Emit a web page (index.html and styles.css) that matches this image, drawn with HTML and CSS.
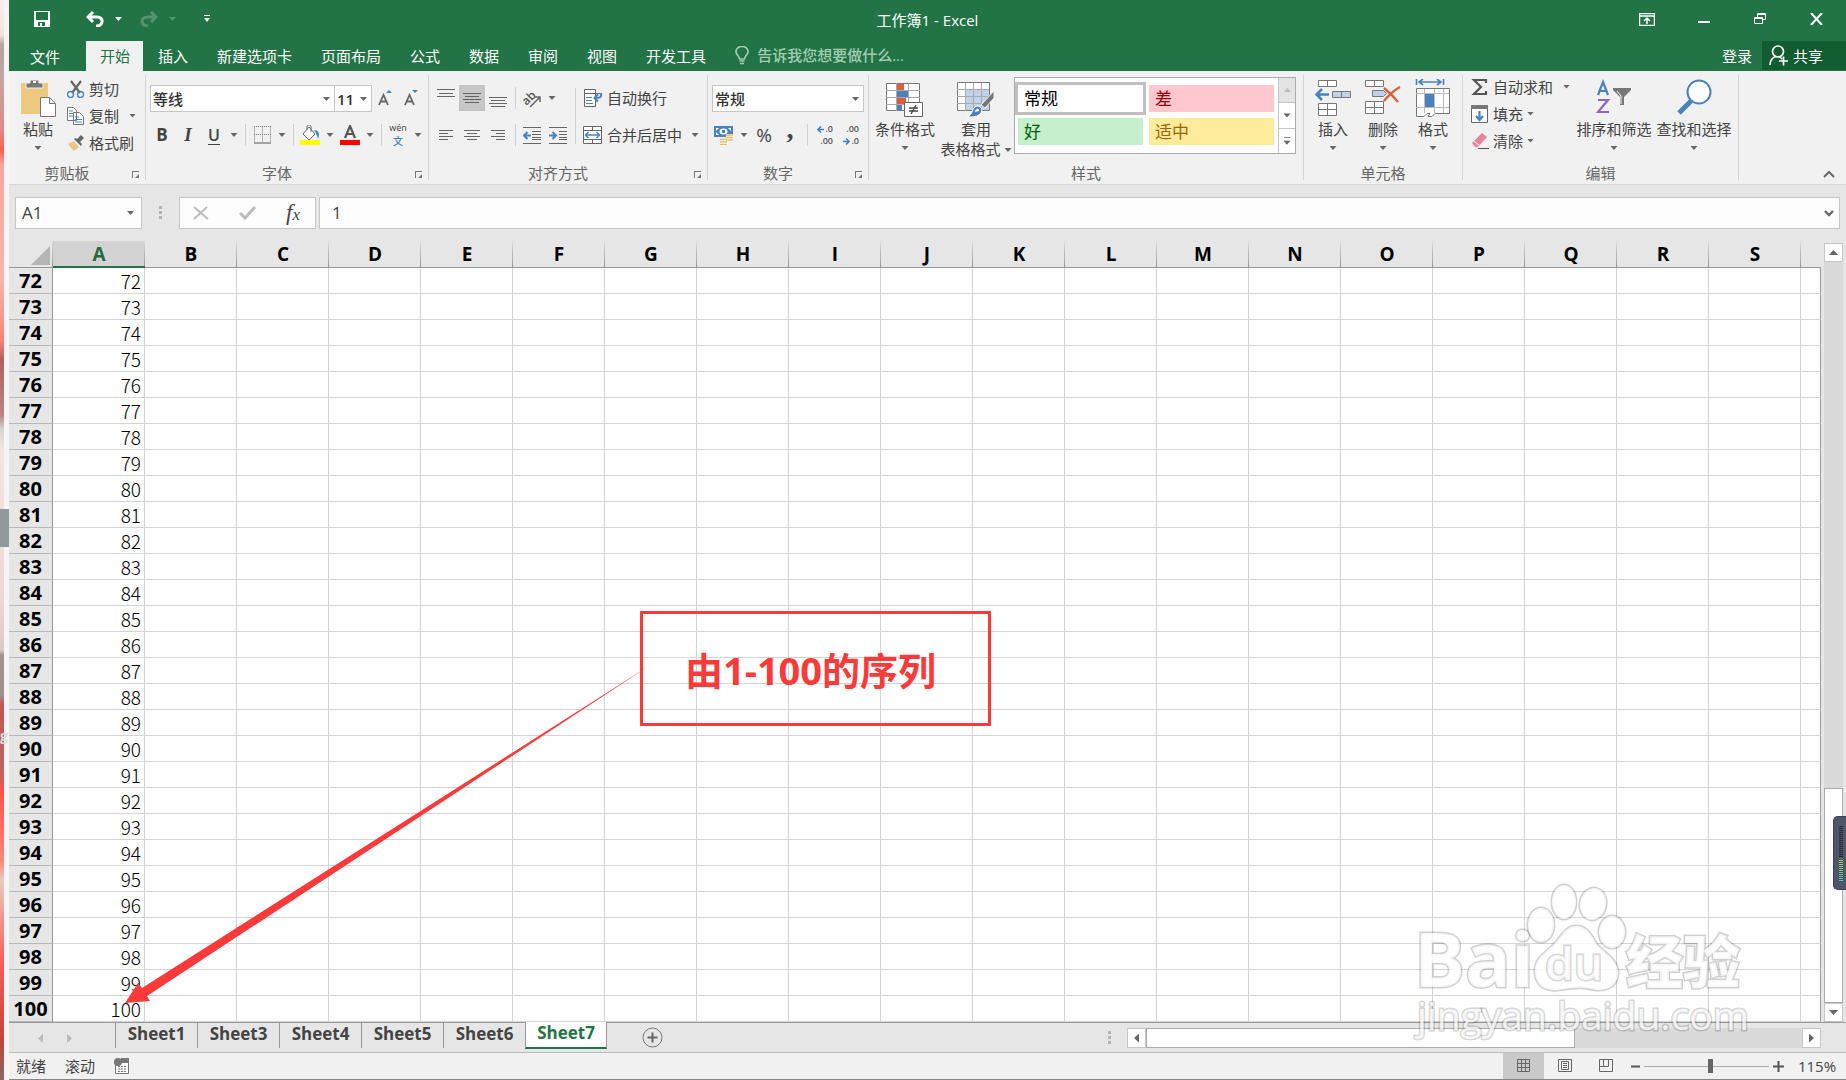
FILE: index.html
```html
<!DOCTYPE html>
<html lang="zh-CN">
<head>
<meta charset="utf-8">
<meta name="viewport" content="width=device-width, initial-scale=1">
<title>工作簿1 - Excel</title>
<link rel="stylesheet" href="styles.css">
</head>
<body>
<div class="desktop-edge"><span class="desktop-chip"></span><span class="desktop-letter">g</span></div>
<div class="app">
  <header class="titlebar">
    <div class="quick">
      <button aria-label="保存"><svg width="16" height="16" viewBox="0 0 16 16"><path fill="#fff" fill-rule="evenodd" d="M0 0h16v16H0zM2 1v8h12V1zM4 11v4h2v-3h2v3h3v-4z"/></svg></button>
      <button class="undo" aria-label="撤消"><svg width="18" height="16" viewBox="0 0 18 16"><path d="M7 1L2 6l5 5M2 6h9c7 0 7 9-1 9" fill="none" stroke="#fff" stroke-width="3"/></svg></button>
      <i class="caret light"></i>
      <button class="redo" aria-label="恢复"><svg width="18" height="16" viewBox="0 0 18 16"><path d="M11 1l5 5-5 5M16 6H8c-8 0-8 8 0 9" fill="none" stroke="#529470" stroke-width="3"/></svg></button>
      <i class="caret dim"></i>
      <button class="more" aria-label="自定义快速访问工具栏"><svg width="6" height="8" viewBox="0 0 6 8"><path d="M0 0h6v1H0zM0 3h6L3 7z" fill="#fff"/></svg></button>
    </div>
    <h1>工作簿1 - Excel</h1>
    <div class="window-buttons">
      <button aria-label="功能区显示选项"><svg width="16" height="13" viewBox="0 0 16 13"><path d="M.5.5h15v12H.5zM1 3h14M8 11V5M5 8l3-3 3 3" fill="none" stroke="#fff" stroke-width="1.5"/></svg></button>
      <button aria-label="最小化"><svg width="13" height="14" viewBox="0 0 13 14"><path d="M0 9h12v2H0z" fill="#fff"/></svg></button>
      <button aria-label="还原"><svg width="13" height="14" viewBox="0 0 13 14"><path d="M.5 5.500h8v6h-8zM.5 6.500h8M3.500 5V1.500h8v6H9M3.500 2.500h8" fill="none" stroke="#fff"/></svg></button>
      <button aria-label="关闭"><svg width="13" height="12" viewBox="0 0 13 12"><path d="M1 0l11 12M12 0L1 12" stroke="#fff" stroke-width="2"/></svg></button>
    </div>
  </header>

  <nav class="menu">
    <button class="file">文件</button>
    <button class="current">开始</button>
    <button>插入</button>
    <button>新建选项卡</button>
    <button>页面布局</button>
    <button>公式</button>
    <button>数据</button>
    <button>审阅</button>
    <button>视图</button>
    <button>开发工具</button>
    <button class="tell"><svg width="14" height="19" viewBox="0 0 14 19"><path d="M4.500 13c0-3-3.500-4-3.500-7.500a6 5 0 0 1 12 0C13 9 9.500 10 9.500 13zM4.500 15h5M5 17.500h4" fill="none" stroke="#a3cdb3" stroke-width="1.700"/></svg>告诉我您想要做什么...</button>
    <button class="login">登录</button>
    <button class="share"><svg width="20" height="21" viewBox="0 0 20 21"><path d="M9 1a5.500 5.500 0 1 1 0 11A5.500 5.500 0 0 1 9 1zM1 20c0-5 3-8 6-8.500M11 12l2 2M10 16h9M14.500 11.500v9" fill="none" stroke="#fff" stroke-width="1.700"/></svg>共享</button>
  </nav>

  <section class="ribbon">
    <div class="group g-clip">
      <div class="body">
        <button class="big w58"><svg width="35" height="40" viewBox="0 0 35 40"><path d="M0 4h27v31H0z" fill="#edc87e"/><path d="M5 9V4h4V1h9v3h4v5z" fill="#777" stroke="#f1f1f1"/><path d="M12 2h3v2h-3z" fill="#fff"/><path d="M19.500 18.500h9l6 6v13h-15zM28.500 18.500v6h6" fill="#fff" stroke="#777"/></svg><span>粘贴</span><i class="caret"></i></button>
        <div class="stack low">
          <button><svg width="18" height="18" viewBox="0 0 18 18"><path d="M4 1l9 12M14 1L5 13" stroke="#666" stroke-width="2.200"/><path d="M3.500 11.500a3 3 0 1 1 0 6 3 3 0 0 1 0-6zM13.500 11.500a3 3 0 1 1 0 6 3 3 0 0 1 0-6z" fill="none" stroke="#4a82bd" stroke-width="1.400"/></svg>剪切</button>
          <button><svg width="18" height="18" viewBox="0 0 18 18"><path d="M.5.5h6l3 3v10h-9zM6.500 5.500h6l4 4v8h-10z" fill="#fff" stroke="#777"/><path d="M2 4h4M2 6.500h4M2 9h4M8 10h4M8 12.500h7M8 15h7" stroke="#4a82bd"/></svg>复制<i class="caret wide"></i></button>
          <button><svg width="18" height="18" viewBox="0 0 18 18"><path d="M1 10l6-3 5 6-5 4z" fill="#e9c486"/><path d="M7 5l7 7 1-2-2-2 4-4-3-3-4 4-2-1z" fill="#666"/></svg>格式刷</button>
        </div>
      </div>
      <div class="caption">剪贴板<i class="launch"></i></div>
    </div>

    <div class="group g-font">
      <div class="body rows">
        <div class="row">
          <select class="combo font-name" aria-label="字体"><option>等线</option></select><select class="combo font-size" aria-label="字号"><option>11</option></select>
          <button class="ib" aria-label="增大字号"><svg width="16" height="18" viewBox="0 0 16 18"><path d="M2 16L6.500 6 11 16M4 12.500h5" fill="none" stroke="#666" stroke-width="1.800"/><path d="M9 4l3-3 3 3z" fill="#4a82bd"/></svg></button>
          <button class="ib" aria-label="减小字号"><svg width="16" height="18" viewBox="0 0 16 18"><path d="M2 16L6.500 6 11 16M4 12.500h5" fill="none" stroke="#666" stroke-width="1.800"/><path d="M9 1h6l-3 3z" fill="#4a82bd"/></svg></button>
        </div>
        <div class="row">
          <button class="ib bold">B</button><button class="ib italic">I</button><button class="ib under">U</button><i class="dd"></i><i class="sep"></i>
          <button class="ib" aria-label="边框"><svg width="17" height="18" viewBox="0 0 17 18"><path d="M.5.500v16M8.500.500v16M16.500.500v16M0 .500h17M0 8.500h17" stroke="#777" stroke-dasharray="1 1"/><path d="M0 17h17" stroke="#555" stroke-width="1"/></svg></button><i class="dd"></i><i class="sep"></i>
          <button class="ib" aria-label="填充颜色"><svg width="20" height="20" viewBox="0 0 20 20"><path d="M9 2l6 7-6 6-6-6z" fill="#fff" stroke="#666"/><path d="M7 5V1.500c0-2 4-2 4 0V7" fill="none" stroke="#666"/><path d="M14 5c5 0 6 4 4 9-1-4-2-6-4-9z" fill="#4a82bd"/><path d="M0 15h20v5H0z" fill="#ff0"/></svg></button><i class="dd"></i>
          <button class="ib" aria-label="字体颜色"><svg width="20" height="20" viewBox="0 0 20 20"><path d="M5 13L10 1l5 12M7 9h6" fill="none" stroke="#555" stroke-width="2.200"/><path d="M0 15h20v5H0z" fill="red"/></svg></button><i class="dd"></i><i class="sep"></i>
          <button class="ib phon"><span>wén</span><b>文</b></button><i class="dd"></i>
        </div>
      </div>
      <div class="caption">字体<i class="launch"></i></div>
    </div>

    <div class="group g-align">
      <div class="body">
        <div class="rows narrow">
          <div class="row">
            <button class="ib" aria-label="顶端对齐"><svg width="18" height="18" viewBox="0 0 18 18"><path d="M0 .5h18M2 4.500h14M0 7.500h18" stroke="#666"/></svg></button>
            <button class="ib pressed" aria-label="垂直居中"><svg width="18" height="18" viewBox="0 0 18 18"><path d="M0 4.500h18M2 7.500h14M0 10.500h18M2 13.500h14" stroke="#666"/></svg></button>
            <button class="ib" aria-label="底端对齐"><svg width="18" height="18" viewBox="0 0 18 18"><path d="M0 8.500h18M2 11.500h14M0 14.500h18M2 17.500h14" stroke="#666"/></svg></button><i class="sep"></i>
            <button class="ib" aria-label="方向"><svg class="spill" width="20" height="19" viewBox="0 0 20 19"><text x="0" y="14" transform="rotate(-45 6 10)" class="ab">ab</text><path d="M8 18L18 8M13 8h5v5" fill="none" stroke="#666" stroke-width="1.500"/></svg></button><i class="dd"></i>
          </div>
          <div class="row">
            <button class="ib" aria-label="左对齐"><svg width="14" height="12" viewBox="0 0 14 12"><path d="M0 1.500h14M0 4.500h9M0 7.500h14M0 10.500h9" stroke="#666"/></svg></button>
            <button class="ib" aria-label="居中"><svg width="16" height="12" viewBox="0 0 16 12"><path d="M0 1.500h16M3 4.500h10M0 7.500h16M3 10.500h10" stroke="#666"/></svg></button>
            <button class="ib" aria-label="右对齐"><svg width="14" height="12" viewBox="0 0 14 12"><path d="M0 1.500h14M5 4.500h9M0 7.500h14M5 10.500h9" stroke="#666"/></svg></button><i class="sep"></i>
            <button class="ib" aria-label="减少缩进"><svg width="18" height="17" viewBox="0 0 18 17"><path d="M0 .5h18M9 4.500h9M9 7.500h9M9 10.500h9M9 12.500h9M0 16.500h18" stroke="#666"/><path d="M8 8.500H1M4.500 5L1 8.500 4.500 12" fill="none" stroke="#4a82bd" stroke-width="2"/></svg></button>
            <button class="ib" aria-label="增加缩进"><svg width="18" height="17" viewBox="0 0 18 17"><path d="M0 .5h18M10 4.500h8M10 7.500h8M10 10.500h8M10 12.500h8M0 16.500h18" stroke="#666"/><path d="M0 8.500h7M3.500 5L7 8.500 3.500 12" fill="none" stroke="#4a82bd" stroke-width="2"/></svg></button>
          </div>
        </div>
        <i class="sep tall"></i>
        <div class="rows wraps">
          <button class="labelled"><svg width="20" height="19" viewBox="0 0 20 19"><path d="M1.500.500h11v17h-11zM1 4.500h16" fill="#fff" stroke="#666"/><path d="M3 8.500h6M3 11.500h6M3 14.500h7" stroke="#4a82bd"/><path d="M18 4c1 5-2 5-6 5M15 5.500L11.500 9l3.500 3.500" fill="none" stroke="#4a82bd" stroke-width="2"/></svg>自动换行</button>
          <button class="labelled"><svg width="20" height="19" viewBox="0 0 20 19"><path d="M.5.500h18v17H.5zM.5 4.500h18M.5 13.500h18M9.500.500v4M9.500 13.500v4" fill="#fff" stroke="#666"/><path d="M3 9h13M5.500 6L2.500 9l3 3M13.500 6l3 3-3 3" fill="none" stroke="#4a82bd" stroke-width="1.500"/></svg>合并后居中<i class="dd"></i></button>
        </div>
      </div>
      <div class="caption">对齐方式<i class="launch"></i></div>
    </div>

    <div class="group g-num">
      <div class="body rows">
        <div class="row"><select class="combo number" aria-label="数字格式"><option>常规</option></select></div>
        <div class="row">
          <button class="ib" aria-label="会计数字格式"><svg width="20" height="19" viewBox="0 0 20 19"><path d="M0 0h19v11H0z" fill="#4a82bd"/><path d="M2 2h3L2 5zM17 2h-3l3 3zM2 9h3L2 6zM9.500 2.500a4 3 0 1 1 0 6 4 3 0 0 1 0-6" fill="#fff"/><path d="M8 4h3v3H8z" fill="#4a82bd"/><path d="M12 8h7v8h-5v3H6v-6h6z" fill="#fff"/><path d="M12 9h7M12 11.500h7M12 14h7M6 13.500h7M6 16h7M6 18.500h7" stroke="#e9b96e" stroke-width="1.600"/></svg></button><i class="dd"></i>
          <button class="ib percent">%</button><button class="ib comma">,</button><i class="sep"></i>
          <button class="ib decimals"><span><svg width="7" height="7" viewBox="0 0 7 7"><path d="M7 3.500H1M4 .5l-3 3 3 3" fill="none" stroke="#4a82bd" stroke-width="1.600"/></svg>.0</span><span>.00</span></button>
          <button class="ib decimals"><span>.00</span><span><svg width="7" height="7" viewBox="0 0 7 7"><path d="M0 3.500h6M3 .5l3 3-3 3" fill="none" stroke="#4a82bd" stroke-width="1.600"/></svg>.0</span></button>
        </div>
      </div>
      <div class="caption">数字<i class="launch"></i></div>
    </div>

    <div class="group g-style">
      <div class="body">
        <button class="big w70"><svg width="38" height="40" viewBox="0 0 38 40"><path d="M.5 4.500h33v27H.5z" fill="#fff" stroke="#777"/><path d="M11 5h7v6h-7zM11 19h9v6h-9z" fill="#d9603f"/><path d="M11 12h11v6H11zM11 26h5v5h-5z" fill="#4a82bd"/><path d="M0 11.500h34M0 18.500h34M0 25.500h34M10.500 4v28M22.500 4v28" stroke="#aaa"/><path d="M18.500 23.500h18v14h-18z" fill="#fff" stroke="#666"/><path d="M23 29h9M23 32h9M30 26l-5 9" stroke="#444" stroke-width="1.300"/></svg><span>条件格式</span><i class="caret"></i></button>
        <button class="big w72"><svg width="38" height="40" viewBox="0 0 38 40"><path d="M.5 3.500h32v28H.5z" fill="#fff" stroke="#777"/><path d="M9 11h23v20H9z" fill="#c0d3ea"/><path d="M0 10.500h32M0 17.500h32M0 24.500h32M8.500 4v28M16.500 4v28M24.500 4v28" stroke="#aaa"/><path d="M37 12v7l-9 10-4-3z" fill="#777" stroke="#f1f1f1"/><path d="M10 38c7-3 4-9 10-11 6 0 6 6 2 9-3 2-8 2-12 2z" fill="#4a82bd" stroke="#fff"/><path d="M18 33c0-4 5-4 4-1z" fill="#fff"/></svg><span>套用</span><span>表格格式<i class="caret"></i></span></button>
        <div class="gallery">
          <div class="swatches">
            <button class="sw normal">常规</button><button class="sw bad">差</button>
            <button class="sw good">好</button><button class="sw neutral">适中</button>
          </div>
          <div class="gallery-nav">
            <button class="off" aria-label="向上"><i class="caret up"></i></button><button aria-label="向下"><i class="caret"></i></button><button aria-label="其他"><i class="caret bar"></i></button>
          </div>
        </div>
      </div>
      <div class="caption center">样式</div>
    </div>

    <div class="group g-cell">
      <div class="body">
        <button class="big w50"><svg width="36" height="40" viewBox="0 0 36 40"><path d="M3.500 1.500h18v6h-18zM12.500 1.500v6M3.500 24.500h18v12h-18zM3.500 30.500h18M12.500 24.500v12" fill="#fff" stroke="#777"/><path d="M17.500 12.500h18v6h-18zM26.500 12.500v6" fill="#c0d3ea" stroke="#777"/><path d="M14 15.500H2M7 10l-5.500 5.500L7 21" fill="none" stroke="#4a82bd" stroke-width="2.600"/></svg><span>插入</span><i class="caret"></i></button>
        <button class="big w50"><svg width="36" height="40" viewBox="0 0 36 40"><path d="M.5 1.500h18v6H.5zM9.500 1.500v6M.5 22.500h18v12H.5zM.5 28.500h18M9.500 22.500v12" fill="#fff" stroke="#777"/><path d="M7.500 11.500h11l3 3-3 3h-11z" fill="#c0d3ea" stroke="#777"/><path d="M19 9c5 4 10 9 14 14M35 8c-7 4-12 9-16 14" fill="none" stroke="#d9603f" stroke-width="2.400"/></svg><span>删除</span><i class="caret"></i></button>
        <button class="big w50"><svg width="36" height="40" viewBox="0 0 36 40"><path d="M1.500 0v6M28.500 0v6M4 3h22M8 0L4 3l4 3M22 0l4 3-4 3" fill="none" stroke="#4a82bd" stroke-width="1.600"/><path d="M1.500 9.500h33v25H20l-3 3h-4l2-3h-3l-3 3H1.500z" fill="#fff" stroke="#777"/><path d="M1 14.500h33M1 28.500h33M9.500 10v24M19.500 10v24M28.500 10v24" stroke="#bbb"/><path d="M10 15h9v13h-9z" fill="#4a82bd"/></svg><span>格式</span><i class="caret"></i></button>
      </div>
      <div class="caption center">单元格</div>
    </div>

    <div class="group g-edit">
      <div class="body">
        <div class="stack">
          <button><svg width="18" height="18" viewBox="0 0 18 18"><path d="M15 5V2H3l7 7-7 7h12v-3" fill="none" stroke="#555" stroke-width="2.200"/></svg>自动求和<i class="caret wide"></i></button>
          <button><svg width="18" height="18" viewBox="0 0 18 18"><path d="M.5.500h16v17H.5z" fill="#fff" stroke="#666"/><path d="M0 0h17v4H0z" fill="#777"/><path d="M8.500 6v9M5 11l3.500 4 3.500-4" fill="none" stroke="#4a82bd" stroke-width="2.200"/></svg>填充<i class="caret"></i></button>
          <button><svg width="18" height="18" viewBox="0 0 18 18"><path d="M1 11L11 1l5 4L7 15H4z" fill="#e8859a"/><path d="M3 9l6 5" stroke="#fff"/><path d="M7 16.500h11" stroke="#555"/></svg>清除<i class="caret"></i></button>
        </div>
        <button class="big w80"><svg width="36" height="40" viewBox="0 0 36 40"><path d="M2 16L7 3l5 13M4 12h6" fill="none" stroke="#4a82bd" stroke-width="2.200"/><path d="M2 21h10L2 33h11" fill="none" stroke="#9563b8" stroke-width="2.200"/><path d="M17 9h18v2l-7 7v8h-4v-8l-7-7z" fill="#777"/><path d="M21 12l4 5v8" fill="none" stroke="#fff"/></svg><span>排序和筛选</span><i class="caret"></i></button>
        <button class="big w80"><svg width="36" height="40" viewBox="0 0 36 40"><path d="M3 34l12-12" stroke="#4a82bd" stroke-width="5"/><circle cx="23" cy="13" r="11.500" fill="#fff" stroke="#4a82bd" stroke-width="2"/></svg><span>查找和选择</span><i class="caret"></i></button>
      </div>
      <div class="caption center">编辑</div>
    </div>
    <button class="collapse" aria-label="折叠功能区"><svg width="12" height="8" viewBox="0 0 12 8"><path d="M1 7l5-5 5 5" fill="none" stroke="#666" stroke-width="2"/></svg></button>
  </section>

  <div class="formula-bar">
    <div class="name-box"><input value="A1" aria-label="名称框"><i class="caret"></i></div>
    <i class="dots"></i>
    <div class="fx">
      <button aria-label="取消"><svg width="16" height="14" viewBox="0 0 16 14"><path d="M1 1l14 12M14 1L1 13" stroke="#bbb" stroke-width="2"/></svg></button>
      <button aria-label="输入"><svg width="17" height="14" viewBox="0 0 17 14"><path d="M1 7l5 5L16 1" fill="none" stroke="#bbb" stroke-width="3"/></svg></button>
      <button class="fx-label">f<small>x</small></button>
    </div>
    <div class="formula"><input value="1" aria-label="编辑栏"><svg width="10" height="7" viewBox="0 0 10 7"><path d="M1 1l4 4 4-4" fill="none" stroke="#666" stroke-width="2.400"/></svg></div>
  </div>

  <main class="sheet">
    <div class="grid-wrap">
      <table class="grid" id="grid"></table>
    </div>
    <div class="vscroll">
      <button aria-label="向上滚动"><i class="tri up"></i></button>
      <div class="trough"><div class="thumb"></div></div>
      <button aria-label="向下滚动"><i class="tri"></i></button>
    </div>
    <svg class="arrow" width="660" height="790" viewBox="0 0 660 790"><path d="M116 762l13-20 4 5L643 423 138 755l3 5z" fill="#fd3a3a"/></svg>
    <div class="callout">由1-100的序列</div>
    <svg class="watermark" width="350" height="170" viewBox="0 0 350 170">
      <g class="mark">
        <text x="5" y="108" class="bai">Bai</text>
        <ellipse cx="132" cy="46" rx="13" ry="17"/><ellipse cx="155" cy="23" rx="12" ry="17"/><ellipse cx="184" cy="25" rx="13" ry="16" transform="rotate(12 184 25)"/><ellipse cx="203" cy="53" rx="13" ry="16"/>
        <path d="M167 47c11 0 15 8 20 17 7 10 22 15 22 30 0 12-10 18-21 17-8-1-14-3-21-2-9 0-15 3-24 2-11-1-17-8-17-19 0-14 12-19 21-29 7-8 10-16 20-16z"/>
        <text x="136" y="101" class="du">du</text>
        <text x="217" y="104" class="jy">经验</text>
        <text x="8" y="151" class="url">jingyan.baidu.com</text>
      </g>
    </svg>
    <div class="meter"><i></i></div>
  </main>

  <div class="tabbar">
    <div class="tab-nav"><i class="tri left"></i><i class="tri right"></i></div>
    <div class="tabs">
      <button>Sheet1</button><button>Sheet3</button><button>Sheet4</button><button>Sheet5</button><button>Sheet6</button><button class="active">Sheet7</button>
      <button class="add" aria-label="新工作表"><svg width="21" height="21" viewBox="0 0 21 21"><circle cx="10.500" cy="10.500" r="9.500" fill="none" stroke="#777"/><path d="M10.500 5.500v10M5.500 10.500h10" stroke="#666" stroke-width="2"/></svg></button>
    </div>
    <i class="dots"></i>
    <div class="hscroll">
      <button aria-label="向左滚动"><i class="tri left"></i></button>
      <div class="trough"><div class="thumb"></div></div>
      <button aria-label="向右滚动"><i class="tri right"></i></button>
    </div>
  </div>

  <footer class="status">
    <span>就绪</span><span>滚动</span>
    <svg width="16" height="16" viewBox="0 0 16 16"><path d="M1.500 3v12.500h13V2" fill="#fff" stroke="#777"/><path d="M7 0h8v5H7z" fill="#777"/><circle cx="4" cy="4" r="4" fill="#777"/><path d="M4 8.500h9M4 11h9M4 13.500h9" stroke="#777" stroke-dasharray="2 1"/></svg>
    <div class="views">
      <button class="on" aria-label="普通"><svg width="14" height="14" viewBox="0 0 14 14"><path d="M.5.500h12v12H.5zM4.500 0v13M8.500 0v13M0 4.500h13M0 8.500h13" fill="none" stroke="#666"/></svg></button>
      <button aria-label="页面布局"><svg width="14" height="14" viewBox="0 0 14 14"><path d="M.5.500h13v12H.5zM3.500 2.500h7v8h-7zM5 4.500h4M5 6.500h4M5 8.500h4" fill="none" stroke="#666"/></svg></button>
      <button aria-label="分页预览"><svg width="14" height="14" viewBox="0 0 14 14"><path d="M.5.500h13v12H.5zM4.500.500v7h5v-7M.5 7.500h4" fill="none" stroke="#666"/></svg></button>
    </div>
    <button class="zoom-step" aria-label="缩小"><svg width="11" height="11" viewBox="0 0 11 11"><path d="M1 5.500h9" stroke="#555" stroke-width="2"/></svg></button>
    <input type="range" min="0" max="100" value="53" aria-label="显示比例">
    <button class="zoom-step" aria-label="放大"><svg width="11" height="11" viewBox="0 0 11 11"><path d="M0 5.500h11M5.500 0v11" stroke="#555" stroke-width="2"/></svg></button>
    <button class="zoom-value">115%</button>
  </footer>
</div>
<script src="sheet.js"></script>
</body>
</html>
```
FILE: styles.css
```css
* { box-sizing: border-box; }
body {
  margin: 0;
  display: flex;
  min-height: 100vh;
  font: 15px/20px "Open Sans", "Noto Sans CJK SC", sans-serif;
  color: #444;
  background: #e6e6e6;
}
button {
  display: inline-flex;
  align-items: center;
  justify-content: center;
  margin: 0;
  padding: 0;
  border: 0;
  background: none;
  font: inherit;
  color: inherit;
  white-space: nowrap;
}
button, svg, i { flex: none; }
svg { display: block; }
input { font: inherit; color: inherit; border: 0; background: none; padding: 0; margin: 0; }

/* desktop showing beside the window */
.desktop-edge {
  flex: none;
  width: 9px;
  position: relative;
  border-right: 5px solid #f6f4f4;
  background: linear-gradient(#f8f0ee 0, #f3e3df 35px, #b7a3a0 45px, #c4a5a2 80px, #e08a85 130px, #ff5c50 150px, #f7a79d 165px, #f8b4ac 280px, #ff8476 340px, #b0605e 360px, #b98582 415px, #d8d8d4 430px, #f3e4e0 450px, #efd8d4 600px, #dcc8c4 650px, #a39390 655px, #a0908d 695px, #c75550 705px, #bd6460 770px, #fb5348 790px, #ff8476 860px, #e8c9c2 880px, #fb5f55 960px, #c2443d 1040px, #8c6866 1080px);
}
.desktop-chip { position: absolute; left: 0; top: 495px; width: 9px; height: 38px; background: #929a9e; }
.desktop-chip { top: 509px; }
.desktop-letter { position: absolute; left: 0; top: 726px; color: #ddd; font-size: 14px; font-weight: 700; }

.app { flex: 1; min-width: 0; display: flex; flex-direction: column; position: relative; }

/* title bar */
.titlebar {
  height: 41px;
  display: grid;
  grid-template-columns: 1fr auto 1fr;
  padding-bottom: 8px;
  align-items: center;
  background: #227447;
  color: #fff;
}
.titlebar h1 { margin: 0; padding-top: 6px; font-size: 15px; font-weight: 400; line-height: 20px; }
.quick { display: flex; align-items: center; padding: 5px 0 0 25px; }
.quick .undo { margin-left: 36px; }
.quick .redo { margin-left: 18px; }
.quick .caret { margin-left: 11px; }
.quick .more { margin-left: 28px; }
.window-buttons { display: flex; justify-content: flex-end; gap: 43px; padding: 5px 23px 0 0; }

.caret { display: inline-block; width: 7px; height: 4px; background: #666; clip-path: polygon(0 0, 100% 0, 50% 100%); }
.caret.light { background: #fff; }
.caret.dim { background: #529470; }
.caret.up { background: #bbb; transform: rotate(180deg); }
.caret.bar { height: 8px; clip-path: polygon(0 0, 100% 0, 100% 1px, 0 1px, 0 4px, 100% 4px, 50% 100%, 0 4px); }

/* menu tabs */
.menu { height: 30px; display: flex; background: #227447; color: #fff; }
.menu button { padding: 0 14px 1px 15px; }
.menu .file { width: 77px; padding: 2px 19px 0 14px; }
.menu .current { width: 57px; background: #f1f1f1; color: #227447; }
.menu .tell { gap: 8px; padding: 0 0 2px 15px; color: #a3cdb3; font-weight: 500; }
.menu .login { margin-left: auto; padding: 0 10px; }
.menu .share { width: 84px; height: 29px; justify-content: flex-start; gap: 4px; padding: 0 0 0 7px; background: #115c30; }

/* ribbon */
.ribbon { display: flex; height: 114px; padding-top: 4px; background: #f1f1f1; border-bottom: 1px solid #d4d4d4; }
.group { flex: none; position: relative; display: flex; flex-direction: column; height: 105px; border-right: 1px solid #d4d4d4; }
.g-clip { width: 137px; }
.g-font { width: 283px; }
.g-align { width: 279px; }
.g-num { width: 161px; }
.g-style { width: 435px; }
.g-cell { width: 159px; }
.g-edit { width: 276px; }
.body { flex: 1; display: flex; }
.caption { display: flex; justify-content: center; position: relative; padding-right: 20px; color: #666; height: 17px; line-height: 20px; }
.caption.center { padding-right: 0; }
.launch { position: absolute; right: 6px; top: 8px; width: 7px; height: 7px; border: solid #777; border-width: 1px 0 0 1px; }
.launch::after { content: ""; position: absolute; right: 0; bottom: 0; width: 4px; height: 4px; background: #777; clip-path: polygon(100% 0, 100% 100%, 0 100%); }

.big { flex-direction: column; justify-content: flex-start; padding-top: 4px; height: 86px; }
.big > .caret { margin-top: 7px; }
.big span { line-height: 20px; }
.big span .caret { margin: 0 0 3px 4px; }
.w58 { width: 58px; }
.w50 { width: 50px; }
.w70 { width: 70px; }
.w72 { width: 72px; }
.w80 { width: 80px; }

.stack { display: flex; flex-direction: column; align-items: flex-start; margin-top: -2px; }
.stack.low { margin-top: 0; }
.stack button { height: 27px; gap: 4px; }
.stack .caret.wide { margin-left: 6px; }
.g-edit .stack { width: 111px; padding-left: 8px; }
.g-cell .body { padding-left: 4px; }
.g-style .body { padding-left: 1px; }

.rows { display: flex; flex-direction: column; gap: 11px; padding: 10px 0 0 3px; }
.row { display: flex; height: 26px; flex: none; }
.narrow { width: 142px; padding-left: 4px; }
.wraps { padding-left: 4px; align-items: flex-start; }
.labelled { height: 26px; gap: 4px; }
.labelled .dd { margin-left: 2px; }
.ib { width: 26px; height: 26px; }
.pressed { background: #c6c6c6; }
.dd { width: 14px; display: inline-flex; align-items: center; justify-content: center; }
.dd::before { content: ""; width: 7px; height: 4px; background: #666; clip-path: polygon(0 0, 100% 0, 50% 100%); }
.sep { width: 8px; height: 22px; margin-top: 2px; background: linear-gradient(#d0d0d0, #d0d0d0) center / 1px 100% no-repeat; }
.sep.tall { height: 56px; margin-top: 13px; }
.bold { font-weight: 700; font-size: 17px; }
.italic { font: italic 700 19px/20px "Liberation Serif", serif; }
.under { font-weight: 600; font-size: 16px; text-decoration: underline; text-underline-offset: 3px; }
.phon { flex-direction: column; justify-content: flex-start; font-size: 9px; line-height: 12px; }
.phon b { font-size: 10px; line-height: 14px; color: #4a82bd; font-weight: 500; }
.percent { font-size: 19px; }
.comma { font: 700 28px/10px "Liberation Serif", serif; padding-bottom: 12px; }
.decimals { flex-direction: column; font-size: 9px; line-height: 12px; font-weight: 600; color: #555; align-items: flex-end; padding-right: 4px; }
.decimals span { display: flex; align-items: center; gap: 1px; }
.spill { overflow: visible; }
.ab { font-size: 12px; font-weight: 600; fill: #555; }
.combo {
  appearance: none;
  height: 27px;
  padding: 0 2px;
  border: 1px solid #c6c6c6;
  border-radius: 0;
  color: #333;
  font: 500 15px/20px "Open Sans", "Noto Sans CJK SC", sans-serif;
  background: #fff url("data:image/svg+xml,%3Csvg xmlns='http://www.w3.org/2000/svg' width='7' height='4'%3E%3Cpath d='M0 0h7L3.500 4z' fill='%23666'/%3E%3C/svg%3E") right 4px center no-repeat;
}
.font-name { width: 185px; margin-left: 1px; }
.font-size { width: 38px; margin-left: -1px; font-weight: 600; }
.number { width: 152px; margin-left: 1px; }

.gallery { display: flex; width: 282px; height: 77px; margin: 2px 0 0 2px; border: 1px solid #ababab; background: #fff; }
.swatches { flex: 1; display: grid; grid-template-columns: 125px 125px; grid-auto-rows: 27px; gap: 6px; padding: 7px 0 0 3px; }
.sw { justify-content: flex-start; padding-left: 6px; font-size: 17px; }
.normal { outline: 3px solid #c0c0c0; color: #000; }
.bad { background: #ffc7ce; color: #9c0006; }
.good { background: #c6efce; color: #006100; }
.neutral { background: #ffeb9c; color: #9c6500; }
.gallery-nav { width: 17px; display: flex; flex-direction: column; border-left: 1px solid #c6c6c6; }
.gallery-nav button { flex: 1; border-bottom: 1px solid #c6c6c6; }
.gallery-nav button:last-child { border-bottom: 0; }
.gallery-nav .off { background: #e4e4e4; }
.collapse { margin-left: auto; align-self: flex-end; padding: 0 11px 6px 0; }

/* formula bar */
.formula-bar { display: flex; height: 56px; padding: 12px 6px 12px 6px; background: #e6e6e6; }
.name-box, .fx, .formula { display: flex; align-items: center; height: 32px; background: #fdfdfd; border: 1px solid #c6c6c6; }
.name-box { width: 127px; padding: 0 7px 0 6px; font-size: 17px; }
.name-box input { flex: 1; min-width: 0; }
.dots { width: 3px; height: 13px; background: repeating-linear-gradient(#b4b4b4 0 3px, transparent 3px 5px); }
.formula-bar .dots { margin: 9px 17px 0; }
.fx { width: 137px; justify-content: space-between; padding: 0 15px 0 13px; }
.fx-label { font: italic 400 23px/20px "Liberation Serif", serif; }
.fx-label small { font-size: 17px; padding-top: 4px; }
.formula { flex: 1; margin-left: 3px; padding: 0 5px 0 12px; font-size: 17px; }
.formula input { flex: 1; min-width: 0; }

/* sheet */
.sheet { flex: 1; position: relative; display: flex; }
.grid-wrap { flex: 1; min-width: 0; overflow: hidden; }
.grid { width: 100%; table-layout: fixed; border-collapse: separate; border-spacing: 0; background: #fff; }
.grid .c-head { width: 44px; }
.grid .c-cell { width: 92px; }
.grid th, .grid td { padding: 0; height: 26px; line-height: 25px; overflow: hidden; }
.grid th { background: #e6e6e6; color: #000; font-size: 20px; font-weight: 700; }
.grid thead th {
  height: 27px;
  line-height: 24px;
  font-size: 19px;
  border-bottom: 1px solid #999;
  background: linear-gradient(#dcdcdc, #999) right / 1px 100% no-repeat #e6e6e6;
}
.grid thead .selected { background-color: #d2d2d2; color: #1e6b41; border-bottom: 2px solid #227447; }
.grid thead th:last-child { background-image: none; }
.grid tbody th { border-right: 1px solid #999; border-bottom: 1px solid #b8b8b8; }
.grid td { border: solid #d4d4d4; border-width: 0 1px 1px 0; padding-right: 3px; text-align: right; font-family: "Noto Sans CJK SC", sans-serif; font-size: 19px; font-weight: 300; color: #000; }
.grid td:last-child { border-right-color: #999; }
.corner::after { content: ""; display: block; width: 19px; height: 19px; margin: 3px 3px 0 auto; background: #b4b4b4; clip-path: polygon(100% 0, 100% 100%, 0 100%); }

.tri { display: block; width: 9px; height: 5px; background: #666; clip-path: polygon(0 0, 100% 0, 50% 100%); }
.tri.up { transform: rotate(180deg); }
.tri.left { width: 5px; height: 9px; clip-path: polygon(100% 0, 100% 100%, 0 50%); }
.tri.right { width: 5px; height: 9px; clip-path: polygon(0 0, 100% 50%, 0 100%); }
.vscroll { width: 25px; display: flex; flex-direction: column; padding: 2px 3px 0; background: #e6e6e6; }
.vscroll button { height: 19px; background: #fff; border: 1px solid #c6c6c6; }
.trough { flex: 1; display: flex; background: #dadada; }
.vscroll .trough { flex-direction: column; justify-content: flex-end; }
.vscroll .thumb { height: 29%; }
.thumb { background: #fff; border: 1px solid #ababab; }

/* annotations over the cells */
.arrow { position: absolute; left: 0; top: 0; }
.callout {
  position: absolute;
  left: 631px;
  top: 370px;
  width: 351px;
  height: 115px;
  padding: 2px 10px 0 0;
  display: flex;
  align-items: center;
  justify-content: center;
  border: 3px solid #fd3a3a;
  color: #fd3a3a;
  font-size: 38px;
  font-weight: 700;
}
.watermark { position: absolute; right: 87px; bottom: -27px; overflow: visible; }
.mark { fill: #fff; fill-opacity: .8; stroke: #000; stroke-opacity: .18; stroke-width: 3px; paint-order: stroke; }
.bai { font: 700 76px "Open Sans", sans-serif; }
.du { font: 600 46px "Open Sans", sans-serif; }
.jy { font: 900 57px "Noto Sans CJK SC", sans-serif; }
.url { font: 400 39px "Open Sans", sans-serif; }
.meter { position: absolute; right: 0; top: 575px; width: 13px; height: 74px; padding: 9px 3px 8px 5px; border-radius: 5px 0 0 5px; background: #50566a; border: 1px solid #3c4050; border-right: 0; }
.meter i { display: block; height: 56px; background: repeating-linear-gradient(transparent 0 1px, #454a5a 1px 2px), linear-gradient(#2c303c 0 32px, #b6d957 33px, #7ccf8b 44px, #3fd0c0 56px); }

/* sheet tabs */
.tabbar { display: flex; height: 30px; background: #e6e6e6; border-top: 1px solid #999; }
.tab-nav { width: 106px; display: flex; gap: 24px; padding: 11px 0 0 29px; }
.tab-nav .tri { background: #bbb; }
.tabs { flex: 1; display: flex; min-width: 0; }
.tabs button { width: 82px; height: 25px; padding-bottom: 4px; border-left: 1px solid #999; font-size: 17px; font-weight: 700; }
.tabs .active { height: 27px; margin-top: -1px; padding-bottom: 3px; background: #fff; color: #227447; border-right: 1px solid #999; border-bottom: 2px solid #227447; }
.tabs .add { width: 90px; height: 29px; border: 0; padding: 0; }
.tabbar .dots { margin: 8px 16px 0 0; }
.hscroll { flex: none; width: 694px; height: 20px; display: flex; margin: 5px 25px 0 0; }
.hscroll button { width: 19px; background: #fff; border: 1px solid #c6c6c6; }
.hscroll .trough { padding-right: 227px; }
.hscroll .thumb { flex: 1; }

/* status bar */
.status { display: flex; align-items: center; height: 28px; padding: 0 10px 0 7px; background: #f1f1f1; border-top: 1px solid #bcbcbc; border-bottom: 1px solid #868686; }
.status span { margin-right: 19px; }
.views { display: flex; align-self: stretch; margin-left: auto; }
.views button { width: 41px; }
.views .on { background: #c9c9c9; }
.zoom-step { width: 18px; }
.status input { appearance: none; width: 125px; height: 14px; margin: 0; background: linear-gradient(#aaa, #aaa) center / 100% 1px no-repeat; }
.status input::-webkit-slider-thumb { appearance: none; width: 5px; height: 14px; background: #666; }
.zoom-value { width: 38px; margin-left: 11px; }
```
FILE: sheet.js
```js
const letters = [..."ABCDEFGHIJKLMNOPQRS"];
const firstRow = 72;
const lastRow = 100;

const cols = '<colgroup><col class="c-head">' + letters.map(() => '<col class="c-cell">').join("") + "<col></colgroup>";
const head = '<thead><tr><th class="corner"></th>' +
  letters.map((l, i) => `<th scope="col"${i === 0 ? ' class="selected"' : ""}>${l}</th>`).join("") +
  "<th></th></tr></thead>";

let rows = "";
for (let r = firstRow; r <= lastRow; r++) {
  rows += `<tr><th scope="row">${r}</th><td>${r}</td>${"<td></td>".repeat(letters.length)}</tr>`;
}
document.getElementById("grid").innerHTML = cols + head + "<tbody>" + rows + "</tbody>";
```
